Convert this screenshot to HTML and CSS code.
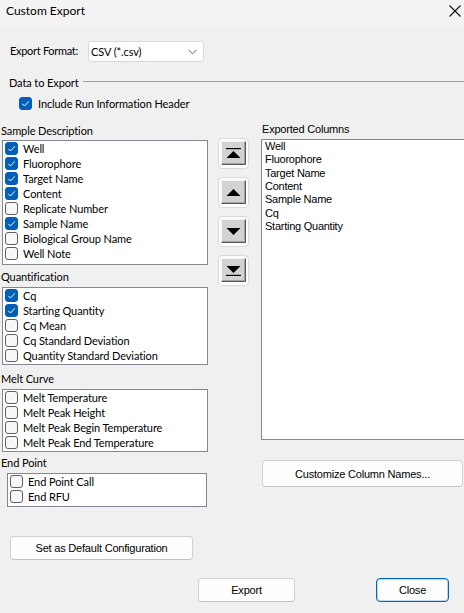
FILE: index.html
```html
<!DOCTYPE html>
<html>
<head>
<meta charset="utf-8">
<link rel="stylesheet" href="styles.css">
</head>
<body>
<div class="window">
  <div class="titlebar">
    <span class="title">Custom Export</span>
    <svg class="close-x" width="12" height="12" viewBox="0 0 12 12"><path d="M0.5 0.5 L11.5 11.5 M11.5 0.5 L0.5 11.5" stroke="#111" stroke-width="1.1" fill="none"/></svg>
  </div>
  <div class="body">
    <div class="format-row">
      <span class="format-label">Export Format:</span>
      <div class="select">
        <span>CSV (*.csv)</span>
        <svg width="9" height="6" viewBox="0 0 9 6"><path d="M0.5 0.8 L4.5 4.8 L8.5 0.8" stroke="#606060" stroke-width="1" fill="none"/></svg>
      </div>
    </div>
    <div class="group-title"><span>Data to Export</span><div class="rule"></div></div>
    <div class="include-row">
      <span class="cb on"><svg viewBox="0 0 13 13"><path d="M3.3 6.8 L5.5 9 L9.8 4.3" stroke="#fff" stroke-width="1" fill="none"/></svg></span>
      <span>Include Run Information Header</span>
    </div>

    <div class="main">
      <div class="left">
        <div class="sec-label first">Sample Description</div>
        <div class="listbox box-sample">
          <div class="item"><span class="cb on"><svg viewBox="0 0 13 13"><path d="M3.3 6.8 L5.5 9 L9.8 4.3" stroke="#fff" stroke-width="1" fill="none"/></svg></span>Well</div>
          <div class="item"><span class="cb on"><svg viewBox="0 0 13 13"><path d="M3.3 6.8 L5.5 9 L9.8 4.3" stroke="#fff" stroke-width="1" fill="none"/></svg></span>Fluorophore</div>
          <div class="item"><span class="cb on"><svg viewBox="0 0 13 13"><path d="M3.3 6.8 L5.5 9 L9.8 4.3" stroke="#fff" stroke-width="1" fill="none"/></svg></span>Target Name</div>
          <div class="item"><span class="cb on"><svg viewBox="0 0 13 13"><path d="M3.3 6.8 L5.5 9 L9.8 4.3" stroke="#fff" stroke-width="1" fill="none"/></svg></span>Content</div>
          <div class="item"><span class="cb"></span>Replicate Number</div>
          <div class="item"><span class="cb on"><svg viewBox="0 0 13 13"><path d="M3.3 6.8 L5.5 9 L9.8 4.3" stroke="#fff" stroke-width="1" fill="none"/></svg></span>Sample Name</div>
          <div class="item"><span class="cb"></span>Biological Group Name</div>
          <div class="item"><span class="cb"></span>Well Note</div>
        </div>

        <div class="sec-label quant">Quantification</div>
        <div class="listbox box-quant">
          <div class="item"><span class="cb on"><svg viewBox="0 0 13 13"><path d="M3.3 6.8 L5.5 9 L9.8 4.3" stroke="#fff" stroke-width="1" fill="none"/></svg></span>Cq</div>
          <div class="item"><span class="cb on"><svg viewBox="0 0 13 13"><path d="M3.3 6.8 L5.5 9 L9.8 4.3" stroke="#fff" stroke-width="1" fill="none"/></svg></span>Starting Quantity</div>
          <div class="item"><span class="cb"></span>Cq Mean</div>
          <div class="item"><span class="cb"></span>Cq Standard Deviation</div>
          <div class="item"><span class="cb"></span>Quantity Standard Deviation</div>
        </div>

        <div class="sec-label melt">Melt Curve</div>
        <div class="listbox box-melt">
          <div class="item"><span class="cb"></span>Melt Temperature</div>
          <div class="item"><span class="cb"></span>Melt Peak Height</div>
          <div class="item"><span class="cb"></span>Melt Peak Begin Temperature</div>
          <div class="item"><span class="cb"></span>Melt Peak End Temperature</div>
        </div>

        <div class="sec-label endp">End Point</div>
        <div class="listbox box-end">
          <div class="item"><span class="cb"></span>End Point Call</div>
          <div class="item"><span class="cb"></span>End RFU</div>
        </div>
      </div>

      <div class="arrows">
        <div class="abtn"><div class="abtn-in">
          <svg width="15" height="13" viewBox="0 0 15 13"><rect x="0" y="1" width="15" height="1.2" fill="#000"/><path d="M0.5 11 L7.5 4 L14.5 11 Z" fill="#000"/></svg>
        </div></div>
        <div class="abtn"><div class="abtn-in">
          <svg width="15" height="13" viewBox="0 0 15 13"><path d="M0.5 10 L7.5 3 L14.5 10 Z" fill="#000"/></svg>
        </div></div>
        <div class="abtn"><div class="abtn-in">
          <svg width="15" height="13" viewBox="0 0 15 13"><path d="M0.5 3 L7.5 10 L14.5 3 Z" fill="#000"/></svg>
        </div></div>
        <div class="abtn"><div class="abtn-in">
          <svg width="15" height="13" viewBox="0 0 15 13"><path d="M0.5 2 L7.5 9 L14.5 2 Z" fill="#000"/><rect x="0" y="10.8" width="15" height="1.2" fill="#000"/></svg>
        </div></div>
      </div>

      <div class="right">
        <div class="exp-label">Exported Columns</div>
        <div class="exp-list">
          <div class="exp-item">Well</div>
          <div class="exp-item">Fluorophore</div>
          <div class="exp-item">Target Name</div>
          <div class="exp-item">Content</div>
          <div class="exp-item">Sample Name</div>
          <div class="exp-item">Cq</div>
          <div class="exp-item">Starting Quantity</div>
        </div>
        <button class="btn btn-custom">Customize Column Names...</button>
      </div>
    </div>

    <div class="default-row">
      <button class="btn btn-default">Set as Default Configuration</button>
    </div>
    <div class="footer">
      <button class="btn btn-export">Export</button>
      <button class="btn btn-close">Close</button>
    </div>
  </div>
</div>
</body>
</html>
```

FILE: styles.css
```css
* { box-sizing: border-box; }
html, body {
  margin: 0;
  padding: 0;
  width: 464px;
  height: 613px;
  overflow: hidden;
  background: #f0f0f0;
}
.window {
  width: 464px;
  height: 613px;
  overflow: hidden;
  font-family: Lato, "Noto Sans", sans-serif;
  font-size: 11px;
  letter-spacing: -0.1px;
  color: #000;
}
.titlebar {
  height: 26px;
  background: #f3f3f3;
  display: flex;
  align-items: center;
  justify-content: space-between;
  padding: 0 3px 4px 6px;
}
.title {
  font-size: 12px;
  letter-spacing: 0;
  line-height: 14px;
}
.close-x { display: block; }

.body {
  display: flex;
  flex-direction: column;
}
.format-row {
  margin-top: 15px;
  height: 21px;
  display: flex;
  align-items: center;
  padding-left: 10px;
}
.format-label {
  width: 78px;
  line-height: 14px;
  margin-top: -2px;
  white-space: nowrap;
  letter-spacing: -0.3px;
}
.select {
  width: 116px;
  height: 21px;
  background: #fff;
  border: 1px solid #d9d9d9;
  border-radius: 3px;
  display: flex;
  align-items: center;
  justify-content: space-between;
  padding: 0 6px 0 2px;
  white-space: nowrap;
}
.group-title {
  margin-top: 12px;
  height: 16px;
  display: flex;
  align-items: center;
  padding-left: 9px;
  white-space: nowrap;
}
.group-title .rule {
  flex: 1;
  height: 1px;
  background: #a0a0a0;
  margin-left: 4px;
  margin-top: -1px;
}
.include-row {
  margin-top: 6px;
  height: 15px;
  display: flex;
  align-items: center;
  padding-left: 19px;
  gap: 6px;
  white-space: nowrap;
}

.cb {
  width: 13px;
  height: 13px;
  flex: none;
  border-radius: 3px;
  border: 1px solid #5f5f5f;
  background: #f7f7f7;
  display: inline-block;
}
.cb.on {
  background: #005fb8;
  border-color: #005fb8;
  position: relative;
}
.cb.on svg {
  position: absolute;
  left: -1px;
  top: -1px;
  width: 13px;
  height: 13px;
  display: block;
}

.main {
  margin-top: 11px;
  display: flex;
  align-items: flex-start;
}
.left {
  width: 208px;
  flex: none;
  display: flex;
  flex-direction: column;
}
.sec-label {
  height: 20px;
  line-height: 20px;
  padding-left: 1px;
  white-space: nowrap;
}
.sec-label.first { height: 18px; line-height: 18px; }
.sec-label.quant { margin-top: 2px; }
.sec-label.melt { margin-top: 4px; }
.sec-label.endp { margin-top: 1px; }

.listbox {
  background: #fff;
  border: 1px solid #828790;
  margin-left: 2px;
  width: 206px;
}
.box-sample { height: 125px; }
.box-quant { height: 78px; }
.box-melt { height: 63px; }
.box-end { height: 34px; margin-left: 7px; width: 200px; }

.item {
  height: 15px;
  display: flex;
  align-items: center;
  padding-left: 2px;
  gap: 5px;
  white-space: nowrap;
  line-height: 14px;
}

.arrows {
  width: 31px;
  margin-left: 10px;
  padding-top: 16px;
  display: flex;
  flex-direction: column;
  gap: 8px;
  flex: none;
}
.abtn {
  width: 31px;
  height: 31px;
  background: #fcfcfc;
  border: 1px solid #dadada;
  border-radius: 4px;
  padding: 2px 2px 3px 2px;
}
.abtn-in {
  width: 25px;
  height: 24px;
  background: #d2d2d2;
  border-top: 1px solid #f4f4f4;
  border-left: 1px solid #f4f4f4;
  border-right: 1px solid #5a5a5a;
  border-bottom: 1px solid #5a5a5a;
  box-shadow: inset -1px -1px 0 #a0a0a0;
  display: flex;
  align-items: center;
  justify-content: center;
}
.abtn-in svg { display: block; }

.right {
  margin-left: 12px;
  width: 212px;
  flex: none;
  display: flex;
  flex-direction: column;
  font-family: "Liberation Sans", Arial, sans-serif;
  font-size: 11px;
}
.exp-label {
  height: 17px;
  line-height: 15px;
  padding-left: 1px;
  letter-spacing: -0.2px;
}
.exp-list {
  height: 301px;
  background: #fff;
  border: 1px solid #828790;
  padding: 0 3px;
}
.exp-item {
  height: 13.33px;
  line-height: 13px;
  letter-spacing: -0.25px;
}

.btn {
  font-family: "Liberation Sans", Arial, sans-serif;
  font-size: 11px;
  letter-spacing: -0.2px;
  color: #000;
  background: #fdfdfd;
  border: 1px solid #d0d0d0;
  border-bottom-color: #c2c2c2;
  border-radius: 4px;
  padding: 0;
  margin: 0;
}
.btn-custom {
  margin-top: 20px;
  margin-left: 1px;
  width: 201px;
  height: 27px;
}
.default-row {
  margin-top: 29px;
  padding-left: 10px;
  display: flex;
}
.btn-default {
  width: 183px;
  height: 24px;
}
.footer {
  margin-top: 18px;
  display: flex;
  padding-left: 198px;
}
.btn-export {
  width: 97px;
  height: 24px;
}
.btn-close {
  margin-left: 81px;
  width: 73px;
  height: 24px;
  border: 1px solid #0067c0;
  box-shadow: inset 0 0 0 1px rgba(0, 103, 192, 0.25);
}
```
